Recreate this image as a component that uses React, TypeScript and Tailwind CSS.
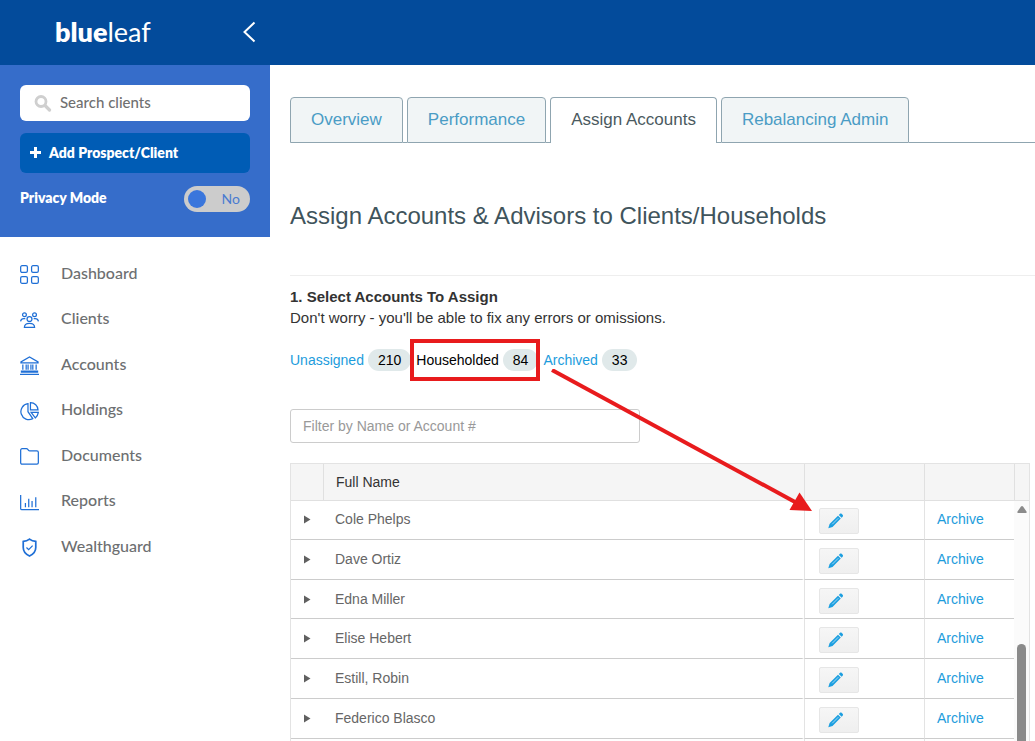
import type { ReactNode } from "react";

type NavItem = { label: string; icon: ReactNode };

const navItems: NavItem[] = [
    {
        label: "Dashboard",
        icon: (
            <>
                <rect x="0.7" y="0.7" width="7.1" height="7.1" rx="1.5" />
                <rect x="12.2" y="0.7" width="7.1" height="7.1" rx="1.5" />
                <rect x="0.7" y="12.2" width="7.1" height="7.1" rx="1.5" />
                <rect x="12.2" y="12.2" width="7.1" height="7.1" rx="1.5" />
            </>
        ),
    },
    {
        label: "Clients",
        icon: (
            <>
                <circle cx="4.7" cy="4" r="2" />
                <circle cx="15.3" cy="4" r="2" />
                <circle cx="10" cy="8.4" r="2.6" />
                <path d="M.6 11c.3-2 1.600-3 3.400-3h1.600M19.400 11c-.3-2-1.600-3-3.400-3h-1.600" />
                <path d="M4.600 17.300c0-3 2.200-4.300 5.400-4.300s5.400 1.300 5.400 4.300z" />
            </>
        ),
    },
    {
        label: "Accounts",
        icon: (
            <>
                <path d="M1 7.200v-1L10 1l9 5.200v1z" />
                <path d="M3 9v5.500M6.500 9v5.500M8.500 9v5.500M11.500 9v5.500M13.500 9v5.500M17 9v5.500" />
                <path d="M1.500 16h17v1H1.500zM0 19.300h20" />
            </>
        ),
    },
    {
        label: "Holdings",
        icon: (
            <>
                <path d="M8.400 1.800v8.400l5 7.300A8.400 8.400 0 1 1 8.400 1.800z" />
                <path d="M11 .7v7.700h8A8 8 0 0 0 11 .7z" />
                <path d="M11.700 11h7.600a9 9 0 0 1-3.200 5.800z" />
            </>
        ),
    },
    {
        label: "Documents",
        icon: (
            <path d="M.7 3.300c0-.9.600-1.500 1.500-1.500h4.600c.7 0 1 .2 1.400.7l.8 1c.3.400.7.600 1.300.600h7.500c.9 0 1.500.600 1.500 1.500v11c0 .9-.6 1.500-1.500 1.500H2.200c-.9 0-1.500-.6-1.500-1.500z" />
        ),
    },
    {
        label: "Reports",
        icon: (
            <>
                <path d="M.7 2v14.300c0 .8.500 1.300 1.300 1.300h18" />
                <path d="M5.700 10.500v4.500M9.200 6v9M12.700 8.500v6.500M16.600 4.500v10.500" />
            </>
        ),
    },
    {
        label: "Wealthguard",
        icon: (
            <>
                <path strokeWidth="1.800" d="M10 1.200c2 1.500 4.200 2.200 6.600 2.400v6.400c0 4.300-2.600 7.100-6.600 8.900-4-1.800-6.600-4.600-6.600-8.900V3.600C5.800 3.400 8 2.700 10 1.200z" />
                <path d="M6.800 10l2.300 2.300 4.200-4.300" />
            </>
        ),
    },
];

const tabs = ["Overview", "Performance", "Assign Accounts", "Rebalancing Admin"];
const activeTab = "Assign Accounts";

const accountFilters = [
    { label: "Unassigned", count: 210 },
    { label: "Householded", count: 84 },
    { label: "Archived", count: 33 },
];
const activeFilter = "Householded";

const households = ["Cole Phelps", "Dave Ortiz", "Edna Miller", "Elise Hebert", "Estill, Robin", "Federico Blasco"];

const Header = () => (
    <header className="h-[65px] shrink-0 bg-[#034b9b] text-white">
        <div className="flex h-full w-[270px] items-center justify-between pr-[14px] pb-[2px] pl-[55px]">
            <a href="#home" className="font-[Lato,sans-serif] text-[27px] leading-8">
                <span className="font-extrabold">blue</span>
                <span className="font-normal">leaf</span>
            </a>
            <button type="button" aria-label="Collapse menu">
                <svg width="14" height="22" viewBox="0 0 14 22" fill="none" stroke="currentColor" strokeWidth="2">
                    <path d="M12.500 1.500L2.500 11l10 9.500" />
                </svg>
            </button>
        </div>
    </header>
);

const SideBar = () => (
    <aside className="w-[270px] shrink-0 font-[Lato,sans-serif]">
        <div className="flex h-[172px] flex-col bg-[#366dca] px-5 pt-5">
            <label className="flex h-9 items-center gap-2 rounded-md bg-white pl-[14px]">
                <svg width="18" height="18" viewBox="0 0 18 18" fill="none" stroke="#cfcfcf">
                    <circle cx="7" cy="7.500" r="5" strokeWidth="2.800" />
                    <path d="M11 11.500l4.500 4.500" strokeWidth="3.200" strokeLinecap="round" />
                </svg>
                <input
                    type="text"
                    aria-label="Search clients"
                    placeholder="Search clients"
                    className="min-w-0 flex-1 pb-px text-[15px] font-medium text-[#666] outline-none placeholder:text-[#707070]"
                />
            </label>
            <button type="button" className="mt-3 flex h-10 items-center gap-2 rounded-md bg-[#005cb5] pb-px pl-[10px] text-sm font-extrabold text-white">
                <svg width="11" height="11" viewBox="0 0 11 11" fill="none" stroke="currentColor" strokeWidth="3">
                    <path d="M5.500 0v11M0 5.500h11" />
                </svg>
                Add Prospect/Client
            </button>
            <div className="mt-[13px] flex items-center justify-between">
                <span id="privacy" className="pb-[2px] text-sm font-extrabold text-white">Privacy Mode</span>
                <button
                    type="button"
                    role="switch"
                    aria-checked="false"
                    aria-labelledby="privacy"
                    className="flex h-[26px] w-[66px] items-center justify-between rounded-full bg-[#ccc] pr-[10px] pl-1 text-sm text-[#4a7bd0]"
                >
                    <span className="size-[18px] rounded-full bg-[#3a76dc]" />
                    No
                </button>
            </div>
        </div>
        <nav className="pt-[15px]">
            <ul>
                {navItems.map((item) => (
                    <li key={item.label} className="h-[45px] even:h-[46px]">
                        <a href={`#${item.label}`} className="flex h-full items-center gap-[22px] pl-5 text-base font-medium text-[#6d6f71]">
                            <svg width="19" height="19" viewBox="0 0 20 20" fill="none" stroke="#1f6fd6" strokeWidth="1.300">
                                {item.icon}
                            </svg>
                            <span className="pb-1">{item.label}</span>
                        </a>
                    </li>
                ))}
            </ul>
        </nav>
    </aside>
);

const Tabs = () => (
    <nav className="flex">
        {tabs.map((tab) => (
            <div key={tab} className="flex">
                <a
                    href={`#${tab}`}
                    className={
                        tab === activeTab
                            ? "flex h-[46px] items-center rounded-t-sm border border-b-0 border-[#8fa5b0] px-5 text-[17px] text-[#4b5a60]"
                            : "flex h-[46px] items-center rounded-t-sm border border-[#8fa5b0] bg-[#f1f5f6] px-5 text-[17px] text-[#4a9cc5]"
                    }
                >
                    {tab}
                </a>
                <span className="w-1 border-b border-[#8fa5b0]" />
            </div>
        ))}
        <span className="flex-1 border-b border-[#8fa5b0]" />
    </nav>
);

const AccountFilters = () => (
    <div className="relative mt-5 flex gap-[5px]">
        {accountFilters.map(({ label, count }) => (
            <a
                key={label}
                href={`#${label}`}
                className={label === activeFilter ? "relative flex items-center gap-1 text-black" : "flex items-center gap-1 text-[#1c9cdc]"}
            >
                {label}
                <span className="rounded-full bg-[#e0e9ea] px-[10px] leading-[22px] text-black">{count}</span>
                {label === activeFilter && <span className="absolute -inset-y-[10px] -right-[2px] -left-[6px] border-4 border-[#e81b1d]" />}
            </a>
        ))}
        {/* callout from the household filter down to the edit buttons */}
        <svg className="pointer-events-none absolute top-5 left-[260px] z-10" width="264" height="144" viewBox="0 0 264 144">
            <path d="M2 1L245 133" stroke="#e81b1d" strokeWidth="4" />
            <path d="M262 142L239.500 141L249.500 123.500z" fill="#e81b1d" />
        </svg>
    </div>
);

const HouseholdTable = () => (
    <div className="mt-5 mr-[5px]">
        <table className="w-full table-fixed border-separate border-spacing-0 border-x border-t border-[#e3e3e3]">
            <colgroup>
                <col className="w-8" />
                <col />
                <col className="w-[120px]" />
                <col className="w-[90px]" />
                <col className="w-[15px]" />
            </colgroup>
            <thead>
                <tr className="h-[37px] bg-[#f5f5f5] text-left text-[#333]">
                    <th className="border-b border-[#e0e0e0]" />
                    <th className="border-b border-l border-[#e0e0e0] pl-3 font-normal">Full Name</th>
                    <th className="border-b border-l border-[#e0e0e0]" />
                    <th className="border-b border-l border-[#e0e0e0]" />
                    <th className="border-b border-l border-[#e0e0e0]" />
                </tr>
            </thead>
            <tbody>
                {households.map((name, index) => (
                    <tr key={name} className="group h-10 align-top text-[#666] first:h-[39px] nth-3:h-[39px]">
                        <td className="border-b border-[#ccc] pt-[15px] pl-[13px] group-first:pt-[14px]">
                            <button type="button" aria-label={`Expand ${name}`} className="block">
                                <svg width="7" height="9" viewBox="0 0 7 9" fill="#606060">
                                    <path d="M0 0.500L6.500 4.500L0 8.500z" />
                                </svg>
                            </button>
                        </td>
                        <td className="border-r-2 border-b border-r-white border-b-[#ccc] pt-[9px] pl-3 group-first:pt-2">{name}</td>
                        <td className="border-b border-l border-b-[#ccc] border-l-[#e3e3e3] pt-2 pl-[14px] group-first:pt-[7px]">
                            <button
                                type="button"
                                aria-label={`Edit ${name}`}
                                className="flex h-[26px] w-10 items-center rounded-xs border border-[#e6e6e6] bg-linear-to-b from-[#f6f6f6] to-[#efefef] pl-2"
                            >
                                <svg width="16" height="16" viewBox="0 0 16 16" fill="#1c9fe0">
                                    <path d="M10.800 1.900l1-1c.7-.6 1.400-.6 2 0l.8.8c.6.600.6 1.300 0 2l-1 1zM10 2.700L12.800 5.500L4.500 13.900L.3 15.200L1.600 11z" />
                                    <path d="M4.200 11.300L10.300 5.200" stroke="#c5e6f7" strokeWidth="0.800" />
                                </svg>
                            </button>
                        </td>
                        <td className="border-b border-l border-b-[#ccc] border-l-[#e3e3e3] pt-[9px] pl-3 group-first:pt-2">
                            <a href="#archive" className="text-[#1c9cdc]">Archive</a>
                        </td>
                        {index === 0 && (
                            <td rowSpan={households.length + 1} className="bg-[#fbfbfb] pt-[5px] pl-[3px]">
                                <svg width="10" height="7" viewBox="0 0 10 7" fill="#8b8b8b">
                                    <path d="M4 .5q1-1 2 0L9.500 5.500q.5 1.500-1 1.500h-7q-1.500 0-1-1.500z" />
                                </svg>
                                <div className="mt-[131px] h-[130px] w-[9px] rounded-full bg-[#8b8b8b]" />
                            </td>
                        )}
                    </tr>
                ))}
                <tr className="h-10">
                    <td />
                    <td className="border-r-2 border-white" />
                    <td className="border-l border-[#e3e3e3]" />
                    <td className="border-l border-[#e3e3e3]" />
                </tr>
            </tbody>
        </table>
    </div>
);

const App = () => (
    <div className="flex h-screen flex-col overflow-hidden bg-white font-['Liberation_Sans',Arial,sans-serif] text-sm">
        <Header />
        <div className="flex min-h-0 flex-1">
            <SideBar />
            <main className="min-w-0 flex-1 pt-8 pl-5 text-[#333]">
                <Tabs />
                <h1 className="mt-[57px] text-2xl text-[#3f545c]">Assign Accounts &amp; Advisors to Clients/Households</h1>
                <hr className="mt-[43px] border-[#eee]" />
                <h2 className="mt-[11px] text-[15px] leading-5 font-bold">1. Select Accounts To Assign</h2>
                <p className="text-[15px] leading-[22px]">Don't worry - you'll be able to fix any errors or omissions.</p>
                <AccountFilters />
                <input
                    type="text"
                    aria-label="Filter by Name or Account #"
                    placeholder="Filter by Name or Account #"
                    className="mt-[38px] block h-[34px] w-[350px] rounded-[3px] border border-[#ccc] px-3 placeholder:text-[#999]"
                />
                <HouseholdTable />
            </main>
        </div>
    </div>
);

export default App;
